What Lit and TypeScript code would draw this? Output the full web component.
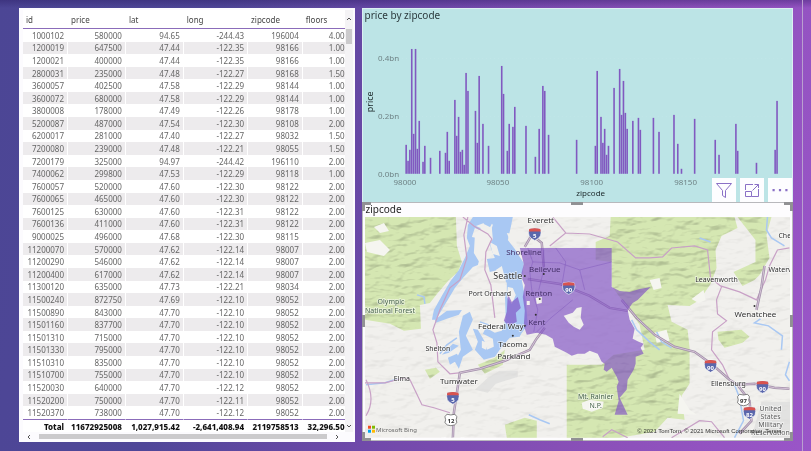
import { LitElement, html, css, svg } from "lit";
import { customElement } from "lit/decorators.js";

const COLUMNS = ["id", "price", "lat", "long", "zipcode", "floors"];

const ROWS = `1000102 580000 94.65 -244.43 196004 4.00
1200019 647500 47.44 -122.35 98166 1.00
1200021 400000 47.44 -122.35 98166 1.00
2800031 235000 47.48 -122.27 98168 1.50
3600057 402500 47.58 -122.29 98144 1.00
3600072 680000 47.58 -122.29 98144 1.00
3800008 178000 47.49 -122.26 98178 1.00
5200087 487000 47.54 -122.30 98108 2.00
6200017 281000 47.40 -122.27 98032 1.50
7200080 239000 47.48 -122.21 98055 1.50
7200179 325000 94.97 -244.42 196110 2.00
7400062 299800 47.53 -122.29 98118 1.00
7600057 520000 47.60 -122.30 98122 2.00
7600065 465000 47.60 -122.30 98122 2.00
7600125 630000 47.60 -122.31 98122 2.00
7600136 411000 47.60 -122.31 98122 2.00
9000025 496000 47.68 -122.30 98115 2.00
11200070 570000 47.62 -122.14 98007 2.00
11200290 546000 47.62 -122.14 98007 2.00
11200400 617000 47.62 -122.14 98007 2.00
11300120 635000 47.73 -122.21 98034 2.00
11500240 872750 47.69 -122.10 98052 2.00
11500890 843000 47.70 -122.10 98052 2.00
11501160 837700 47.70 -122.10 98052 2.00
11501310 715000 47.70 -122.10 98052 2.00
11501330 795000 47.70 -122.10 98052 2.00
11510310 835000 47.70 -122.10 98052 2.00
11510700 755000 47.70 -122.10 98052 2.00
11520030 640000 47.70 -122.12 98052 2.00
11520200 750000 47.70 -122.11 98052 2.00
11520370 738000 47.70 -122.12 98052 2.00`
  .split("\n")
  .map((line) => line.split(" "));

const TOTALS = ["Total", "11672925008", "1,027,915.42", "-2,641,408.94", "2119758513", "32,296.50"];

// Pairs of [zipcode - 98000, bar height].
const BARS: [number, number][] = [
  [1, 29], [2, 13], [3, 24], [4, 125], [5, 40], [6, 125], [7, 25], [8, 53], [10, 12], [11, 28],
  [14, 16], [19, 23], [22, 21], [23, 42], [24, 13], [27, 74], [28, 38], [29, 57], [30, 22],
  [31, 24], [32, 9], [33, 101], [34, 83], [38, 63], [39, 31], [40, 98], [42, 50], [45, 28],
  [52, 108], [53, 80], [55, 23], [56, 50], [58, 47], [59, 67], [65, 48], [70, 17], [72, 45],
  [74, 88], [75, 83], [77, 39], [92, 34], [102, 28], [103, 103], [105, 57], [106, 31], [107, 45],
  [108, 19], [109, 28], [112, 86], [115, 105], [116, 59], [117, 93], [118, 61], [119, 45],
  [122, 53], [125, 56], [126, 44], [133, 56], [136, 42], [144, 59], [146, 30], [148, 5],
  [155, 55], [166, 34], [168, 19], [177, 50], [178, 23], [188, 11], [198, 24], [199, 73],
];

@customElement("data-table")
class DataTable extends LitElement {
  static styles = css`
    :host {
      display: grid;
      grid-template-columns: 1fr 8px;
      grid-template-rows: 1fr 9px;
      background: #fcfbfe;
      padding: 2px 2px 1px 4px;
      box-sizing: border-box;
      min-width: 0;
    }
    table {
      width: 100%;
      height: 100%;
      table-layout: fixed;
      border-collapse: separate;
      border-spacing: 0;
      font: 8px/11px "Noto Sans", sans-serif;
      color: #666;
      background: #fff;
    }
    .id { width: 14%; }
    .price { width: 18%; }
    .lat { width: 18%; }
    .long { width: 20%; }
    .zipcode { width: 17%; }
    th, td { box-sizing: border-box; padding: 0 3px; white-space: nowrap; }
    td { text-align: right; border-right: 1px solid #fff; }
    td:last-child { padding-right: 0; border-right: 0; }
    thead th {
      height: 19px;
      text-align: left;
      font-weight: 400;
      color: #444;
      border-bottom: 1px solid #8b6cba;
    }
    tbody tr:nth-child(even) td { background: #edebed; }
    tfoot td {
      height: 13px;
      border-top: 1px solid #8b6cba;
      color: #111;
      font-weight: 800;
      padding-left: 0;
    }
    .vbar {
      display: flex;
      flex-direction: column;
      align-items: center;
      background: #f4f3f5;
      padding: 7px 0 4px;
    }
    .hbar {
      display: flex;
      align-items: center;
      gap: 8px;
      padding: 0 6px 0 4px;
    }
    .vthumb { width: 6px; height: 15px; background: #cbcacc; margin-top: 8px; }
    .space { flex: 1; }
    .hthumb { flex: 1; height: 5px; background: #cbcacc; }
    .arrow { width: 4px; height: 4px; fill: none; stroke: #555; display: block; }
  `;
  render() {
    return html`
      <table>
        <thead><tr>${COLUMNS.map((c) => html`<th class=${c} scope="col">${c}</th>`)}</tr></thead>
        <tbody>${ROWS.map((r) => html`<tr>${r.map((v) => html`<td>${v}</td>`)}</tr>`)}</tbody>
        <tfoot><tr>${TOTALS.map((v) => html`<td>${v}</td>`)}</tr></tfoot>
      </table>
      <div class="vbar">
        <svg class="arrow" viewBox="0 0 4 4"><path d="M0 3L2 1L4 3" /></svg>
        <div class="vthumb"></div>
        <div class="space"></div>
        <svg class="arrow" viewBox="0 0 4 4"><path d="M0 1L2 3L4 1" /></svg>
      </div>
      <div class="hbar">
        <svg class="arrow" viewBox="0 0 4 4"><path d="M3 0L1 2L3 4" /></svg>
        <div class="hthumb"></div>
        <svg class="arrow" viewBox="0 0 4 4"><path d="M1 0L3 2L1 4" /></svg>
      </div>
    `;
  }
}

@customElement("price-chart")
class PriceChart extends LitElement {
  static styles = css`
    :host {
      display: block;
      position: relative;
      background: #bce4e6;
      border: 1px solid #dceff2;
      border-bottom: 0;
      box-sizing: border-box;
      min-width: 0;
      overflow: hidden;
    }
    h2 { margin: 0; padding-left: 2px; font: 10px/12px "Noto Sans", sans-serif; color: #2b3a3d; }
    .plot { display: block; width: 100%; font: 8px "Noto Sans", sans-serif; fill: #6f8386; }
    .bar { fill: #8159c0; }
    .grid { stroke: #c2e6e8; stroke-dasharray: 1 3; }
    .axis { fill: #222f31; }
    .price { font-size: 9px; }
    .mid { text-anchor: middle; }
    .tools { position: absolute; right: 0; bottom: 0; display: flex; gap: 4px; }
    button { width: 24px; height: 24px; border: 0; padding: 0; background: #fdfdff; display: grid; place-items: center; }
    .icon { width: 18px; height: 18px; fill: none; stroke: #8a70c6; display: block; }
    .dots { fill: #8a70c6; stroke: none; }
  `;
  render() {
    return html`
      <h2>price by zipcode</h2>
      <svg class="plot" viewBox="363 21 430 180" role="img" aria-label="price by zipcode">
        <path class="grid" d="M402 58.5H783M402 116.5H783" />
        ${BARS.map(([z, h]) => svg`<rect class="bar" x=${(403.5 + z * 1.876).toFixed(1)} y=${174 - h} width="1.6" height=${h}></rect>`)}
        <text x="378" y="61">0.4bn</text>
        <text x="378" y="119">0.2bn</text>
        <text x="378" y="177">0.0bn</text>
        <text class="mid" x="405" y="185">98000</text>
        <text class="mid" x="498" y="185">98050</text>
        <text class="mid" x="592" y="185">98100</text>
        <text class="mid" x="686" y="185">98150</text>
        <text class="axis mid" x="591" y="196">zipcode</text>
        <text class="axis price mid" transform="translate(373 102) rotate(-90)">price</text>
      </svg>
      <div class="tools">
        <button aria-label="Filter"><svg class="icon" viewBox="0 0 18 18"><path d="M1.5 2.5H16.5L10.5 9.5V16.5L7.5 14.5V9.5Z" /></svg></button>
        <button aria-label="Focus mode"><svg class="icon" viewBox="0 0 18 18"><path d="M2.5 9V3.5H10M15.5 8V15.5H8.5M2.5 10.5H8.5V15.5H2.5ZM9.5 9.5L15.5 3.5M11.5 3.5H15.5V7" /></svg></button>
        <button aria-label="More options"><svg class="icon" viewBox="0 0 18 18"><path class="dots" d="M1.5 8h2.2v2.2h-2.2zM7.9 8h2.2v2.2h-2.2zM14.3 8h2.2v2.2h-2.2z" /></svg></button>
      </div>
    `;
  }
}

const FORESTS = [
  "M365 217H456L457 246L462 262L458 272L449 280L437 294L430 303L420 305L421 329L404 331L390 324L365 320Z",
  "M611 217H735L738 228L722 236L716 250L717 268L711 284L700 300L690 306L668 305L672 322L688 330L690 348L690 384L682 396L685 420L668 418L655 432L620 438H567V365H602L614 355L645 350L640 325L612 286V262L596 260V242L610 236Z",
  "M738 217H772L767 235L770 258L760 275L755 280L743 286L734 272L756 262L756 240Z",
  "M718 332L742 330L750 337L743 343L725 348L719 340Z",
  "M425 370L436 368L440 372L430 379Z",
  "M478 365L495 358L505 350L503 365L485 374Z",
  "M505 425L525 418L537 421L537 438H507Z",
].join("");

const FREEWAYS =
  "M525 247L532 235L542 243L544 267M453 438L454 413L460 373L480 369L505 361L530 350L536 340L545 328M528 279L560 284L590 296L610 308L628 311M622 300L637 318L655 335L675 347L695 352L713 365L730 380L738 385L755 384L775 388L790 389M738 385L750 401L752 421L740 434M765 266L762 287L757 310";

const interstate = (x: number, y: number, n: string) => svg`
  <g transform="translate(${x} ${y})">
    <path fill="#5a67ac" stroke="#fff" stroke-width=".6" d="M-5.5 -5Q0 -6.5 5.5 -5Q8.5 3 0 6.5Q-8.5 3 -5.5 -5Z" />
    <path fill="#d9534f" d="M-5.5 -5Q0 -6.5 5.5 -5L6 -2.5H-6Z" />
    <text class="shield light" y="4">${n}</text>
  </g>`;

const highway = (x: number, y: number, n: string) => svg`
  <g transform="translate(${x} ${y})">
    <path fill="#fff" stroke="#666" stroke-width=".8" d="M-4 -5.5Q0 -4 4 -5.5L6 -3Q4.5 0 6 3Q4 6 0 6Q-4 6 -6 3Q-4.5 0 -6 -3Z" />
    <text class="shield" y="3">${n}</text>
  </g>`;

@customElement("zip-map")
class ZipMap extends LitElement {
  static styles = css`
    :host {
      display: block;
      position: relative;
      box-sizing: border-box;
      background: #fdfcfe;
      border: 1px solid #b8b8bc;
      padding: 0 2px 2px;
      min-width: 0;
    }
    h2 { margin: 0; font: 10px/12px "Noto Sans", sans-serif; color: #252525; padding: 0 1px 2px; }
    .map { display: block; width: 100%; font: 8px "Noto Sans", sans-serif; }
    .water { fill: #a9c8f3; }
    .land { fill: #f1f0ed; }
    .stream { fill: none; stroke: #a9c8f3; stroke-width: 1.5; }
    .forest { fill: #d5e7b2; }
    .snow { fill: #f5f5f0; }
    .urban { fill: #d9d9d9; opacity: .6; }
    .relief { mix-blend-mode: multiply; opacity: .2; }
    .faint { mix-blend-mode: multiply; opacity: .06; }
    .road { fill: none; stroke: #c8a0c6; stroke-width: 1.2; }
    .freeway { fill: none; stroke: #a391ab; stroke-width: 2.5; }
    .freeway-core { fill: none; stroke: #d4c2d6; stroke-width: 1; }
    .region { fill: #8050c4; fill-opacity: .66; fill-rule: evenodd; }
    .inner { fill: none; stroke: #7146b4; stroke-width: 1; opacity: .35; }
    .label { fill: #303030; text-anchor: middle; paint-order: stroke; stroke: #fff; stroke-opacity: .6; stroke-width: 1.5; }
    .edge { text-anchor: start; }
    .inside { fill: #453069; stroke-opacity: 0; }
    .park { fill: #46634a; }
    .gray { fill: #5c5c5c; }
    .big { font-size: 9px; }
    .small { font-size: 7px; }
    .shield { font-size: 6px; font-weight: 700; text-anchor: middle; fill: #333; }
    .light { fill: #fff; }
    .credit { font: 6px "Liberation Sans", sans-serif; fill: #333; text-anchor: end; }
    .brand { font: 6px "Noto Sans", sans-serif; fill: #666; }
    .grip { position: absolute; box-sizing: border-box; width: 9px; height: 9px; border: 0 solid #919194; }
    .nw { top: -1px; left: -1px; border-width: 3px 0 0 3px; }
    .ne { top: -1px; right: -1px; border-width: 3px 3px 0 0; }
    .sw { bottom: -1px; left: -1px; border-width: 0 0 3px 3px; }
    .se { bottom: -1px; right: -1px; border-width: 0 3px 3px 0; }
    .n, .s { width: 12px; height: 3px; background: #919194; left: calc(50% - 6px); }
    .n { top: -1px; }
    .s { bottom: -1px; }
    .w, .e { width: 3px; height: 12px; background: #919194; top: calc(50% - 6px); }
    .w { left: -1px; }
    .e { right: -1px; }
  `;
  render() {
    const label = (x: number, y: number, t: string, cls = "") =>
      svg`<text class="label ${cls}" x=${x} y=${y}>${t}</text>`;
    return html`
      <h2>zipcode</h2>
      <svg class="map" viewBox="365 217 426 221" role="img" aria-label="Map of zipcodes">
        <defs>
          <filter id="relief" x="0" y="0" width="1" height="1" color-interpolation-filters="sRGB">
            <feTurbulence type="fractalNoise" baseFrequency=".05 .11" numOctaves="3" seed="8" />
            <feDiffuseLighting surfaceScale="5" diffuseConstant="1.25" lighting-color="#fff">
              <feDistantLight azimuth="235" elevation="55" />
            </feDiffuseLighting>
          </filter>
          <clipPath id="hills"><path d=${FORESTS} /></clipPath>
        </defs>
        <rect class="land" x="365" y="217" width="426" height="221" />
        <rect class="faint" x="365" y="217" width="426" height="221" filter="url(#relief)" />
        <path class="forest" d=${FORESTS} />
        <g clip-path="url(#hills)" class="relief">
          <rect x="365" y="217" width="426" height="221" filter="url(#relief)" />
        </g>
        <path class="snow" d="M374 227L384 223L389 231L380 233ZM365 243L380 240L390 250L384 256L367 252ZM582 403L590 400L604 402L603 408L592 412L583 409ZM650 280L660 278L662 288L654 290ZM692 299L704 290L706 300L699 303ZM655 333L667 330L670 341L657 343ZM680 394L690 410L697 415L678 414Z" />
        <path class="urban" d="M475 390L488 378L500 371H518V377L496 384L488 393ZM762 402H791V438H752Z" />
        <g class="water">
          <path d="M473 217L468 225L467 238L470 246L465 258L459 270L450 282L443 294L434 310L432 320L436 320L443 308L455 288L463 278L473 267L478 265L483 247L477 238L472 237L475 228L487 233L493 222L490 217Z" />
          <path d="M488 217H513L511 227L508 240L515 249L520 257L524 263L522 280L526 301L528 325L520 336L512 330L509 315L512 302L507 295L507 283L498 270L490 272L487 259L495 258L491 248L489 237L493 225Z" />
          <path d="M505 293L512 289L523 302L526 320L520 337L510 338L502 347L495 357L484 360L475 350L478 342L473 329L478 330L485 342L487 350L494 347L493 339L483 334L486 328L495 333L502 331L506 319Z" />
          <path d="M463 316L470 312L473 320L466 336L473 350L463 357L459 369L455 362L461 350L459 332ZM435 320L447 311L462 310L459 315L447 319L436 323ZM445 352L453 344L459 346L449 353L442 355ZM448 358L457 354L460 359L450 365Z" />
        </g>
        <path class="land" d="M474 253L475 236L484 224L492 228L493 239L486 250L480 263ZM490 242L497 246L500 256L493 254ZM476 226L484 223L483 229ZM496 270L502 266L506 281L500 281ZM507 233L515 234L518 249L511 243ZM508 287L513 288L516 295L512 304L507 297ZM482 341L488 343L486 350L482 348Z" />
        <path class="stream" d="M417 295L424 297L425 304M457 338L447 345L440 354M467 340L464 352M489 325L480 322M768 217L767 230L772 238L785 246M761 319L755 323L769 326L783 336L782 350M790 362L786 375L790 381M657 332L662 342L672 348M632 320L637 330L650 342L660 350M529 415L540 420L550 424M700 238L711 242M735 385L740 398L744 421L735 438M366 385L385 383L398 379" />
        <path class="road" d="M463 217L474 226L488 234L492 239L486 252L485 270L491 285L495 318M468 217L464 235L467 258L460 280L450 288L440 310L433 330L437 343L438 362L450 374L459 373M365 383L385 383L405 378L410 380L422 405L434 408L450 413M366 380Q376 400 366 416M553 217L566 233L550 246M566 233L590 234L618 242L636 258L650 258L663 257L672 248L695 246L708 250L711 278L721 286L740 292L757 300L766 280L770 266L778 250L790 248M722 287L717 300L718 314L727 321L713 332L712 350L723 365L730 380M603 437L612 430L628 438M672 438L700 421L712 422L725 438" />
        <path class="freeway" d=${FREEWAYS} />
        <path class="freeway-core" d=${FREEWAYS} />
        <path class="region" d="M520 248H612V287L620 291L630 292L640 289L651 287L644 294L638 300L633 303L628 310L630 320L635 329L633 339L639 342L644 344L641 348L644 354L636 357L636 364L634 370L628 380L627 390L620 398L628 415H615L619 401L617 387L619 382L617 377L612 368L607 372L604 370L605 364L602 362L598 354L590 351L585 354L578 354L572 356L567 353L555 347L553 339L546 335L537 333L527 335L524 326L525 311L523 297L525 285L521 276L524 264ZM564 316L573 313L577 308L582 307L581 318L584 325L580 330L574 327L569 323ZM527 301H530V305H527ZM536 298L542 297V303L537 304Z" />
        <path class="region" d="M508 294L512 302L518 297L521 308L516 313L517 322L509 326L504 321L507 312Z" />
        <path class="inner" d="M528 248L533 262L530 272L532 290L538 310L534 332M544 250L544 270L539 290M573 300L550 319L536 333M533 262L560 263L580 270L612 262M556 248L566 262L562 286M580 270L585 290" />
        ${interstate(535, 234, "5")}${interstate(569, 288, "90")}${interstate(453, 398, "5")}
        ${interstate(711, 366, "90")}${interstate(763, 387, "90")}${interstate(750, 413, "82")}
        ${highway(451, 420, "12")}${highway(744, 400, "97")}
        <g fill="#333">
          <circle cx="525" cy="276" r="1" /><circle cx="544" cy="274" r="1" /><circle cx="525" cy="326" r="1" />
          <circle cx="513" cy="336" r="1" /><circle cx="755" cy="306" r="1" /><circle cx="536" cy="315" r="1" />
          <circle cx="540" cy="299" r="1" />
        </g>
        ${label(541, 223, "Everett")}${label(524, 255, "Shoreline", "inside")}
        ${label(508, 279, "Seattle", "big")}${label(545, 272, "Bellevue", "inside")}
        ${label(490, 296, "Port Orchard", "small")}${label(539, 296, "Renton", "inside")}
        ${label(501, 329, "Federal Way")}${label(537, 325, "Kent", "inside")}
        ${label(513, 347, "Tacoma")}${label(514, 359, "Parkland")}
        ${label(438, 351, "Shelton", "small")}${label(402, 381, "Elma", "small")}
        ${label(459, 384, "Tumwater")}${label(391, 304, "Olympic", "park small")}
        ${label(390, 313, "National Forest", "park small")}
        ${label(717, 282, "Leavenworth", "small")}${label(756, 317, "Wenatchee")}
        ${label(729, 386, "Ellensburg", "small")}
        ${label(779, 238, "Chelan", "edge small")}${label(769, 272, "Waterville", "edge small")}
        ${label(596, 399, "Mt. Rainier", "park small")}${label(596, 408, "N.P.", "park small")}
        ${label(771, 411, "United", "gray small")}${label(771, 419, "States", "gray small")}
        ${label(771, 427, "Military", "gray small")}${label(771, 435, "Reservation", "gray small")}
        ${label(454, 443, "Chehalis", "small")}
        <path fill="#f25022" d="M368 426h3v3h-3z" /><path fill="#7fba00" d="M372 426h3v3h-3z" />
        <path fill="#00a4ef" d="M368 430h3v3h-3z" /><path fill="#ffb900" d="M372 430h3v3h-3z" />
        <text class="brand" x="376" y="432">Microsoft Bing</text>
        <text class="credit" x="763" y="433">© 2021 TomTom, © 2021 Microsoft Corporation</text>
        <text class="credit" x="782" y="433">Terms</text>
      </svg>
      ${["nw", "n", "ne", "w", "e", "sw", "s", "se"].map((p) => html`<span class="grip ${p}"></span>`)}
    `;
  }
}

@customElement("app-root")
class AppRoot extends LitElement {
  static styles = css`
    :host {
      display: grid;
      grid-template-columns: 1fr 8px;
      min-height: 100vh;
      box-sizing: border-box;
      background:
        linear-gradient(rgba(35, 20, 90, .35), transparent 8px),
        linear-gradient(100deg, #4c4695 0%, #4f4698 25%, #7049aa 50%, #8a50b8 75%, #9a55c8 100%);
    }
    .board {
      display: grid;
      grid-template-columns: 7fr 9fr;
      gap: 7px;
      padding: 8px 9px 9px 19px;
      border-right: 1px solid #b9a0cf;
    }
    .side { display: grid; grid-template-rows: 194px auto; align-content: start; min-width: 0; }
  `;
  render() {
    return html`
      <main class="board">
        <data-table></data-table>
        <div class="side">
          <price-chart></price-chart>
          <zip-map></zip-map>
        </div>
      </main>
    `;
  }
}
